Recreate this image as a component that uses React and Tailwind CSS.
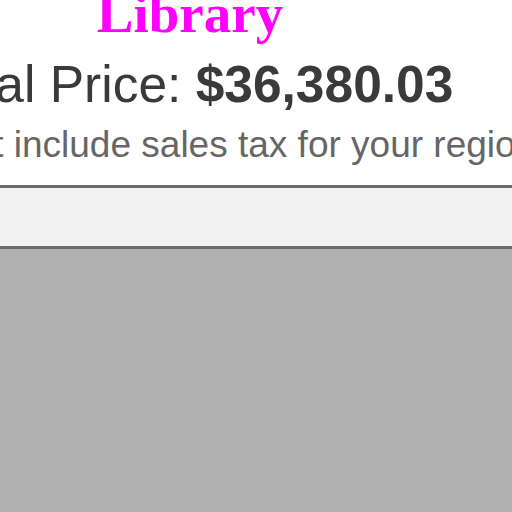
export default function App() {
  return (
    <div className="h-[512px] w-[512px] overflow-hidden bg-white flex flex-col">
      {/* heading block, page is scrolled so it sits off-centre */}
      <div className="ml-[-310px] w-[1000px] flex flex-col items-center text-center whitespace-nowrap">
        <h1 className="mt-[-18px] h-[64px] leading-[64px] text-[55px] font-bold text-[#ff00ff] font-['Liberation_Serif',serif]">
          Library
        </h1>
        <p className="mt-[8px] h-[60px] leading-[60px] text-[51.5px] text-[#3a3a3a] font-['Liberation_Sans',Arial,sans-serif]">
          Total Price: <span className="font-bold">$36,380.03</span>
        </p>
        <p className="mt-[9px] mr-[46px] h-[43px] leading-[43px] text-[37px] text-[#666666] font-['Liberation_Sans',Arial,sans-serif]">
          Prices do not include sales tax for your region.
        </p>
      </div>
      <div className="mt-[19px] h-[64px] shrink-0 border-y-[3px] border-[#6b6b6b] bg-[#f1f1f1]" />
      <div className="flex-1 bg-[#b0b0b0]" />
    </div>
  );
}
